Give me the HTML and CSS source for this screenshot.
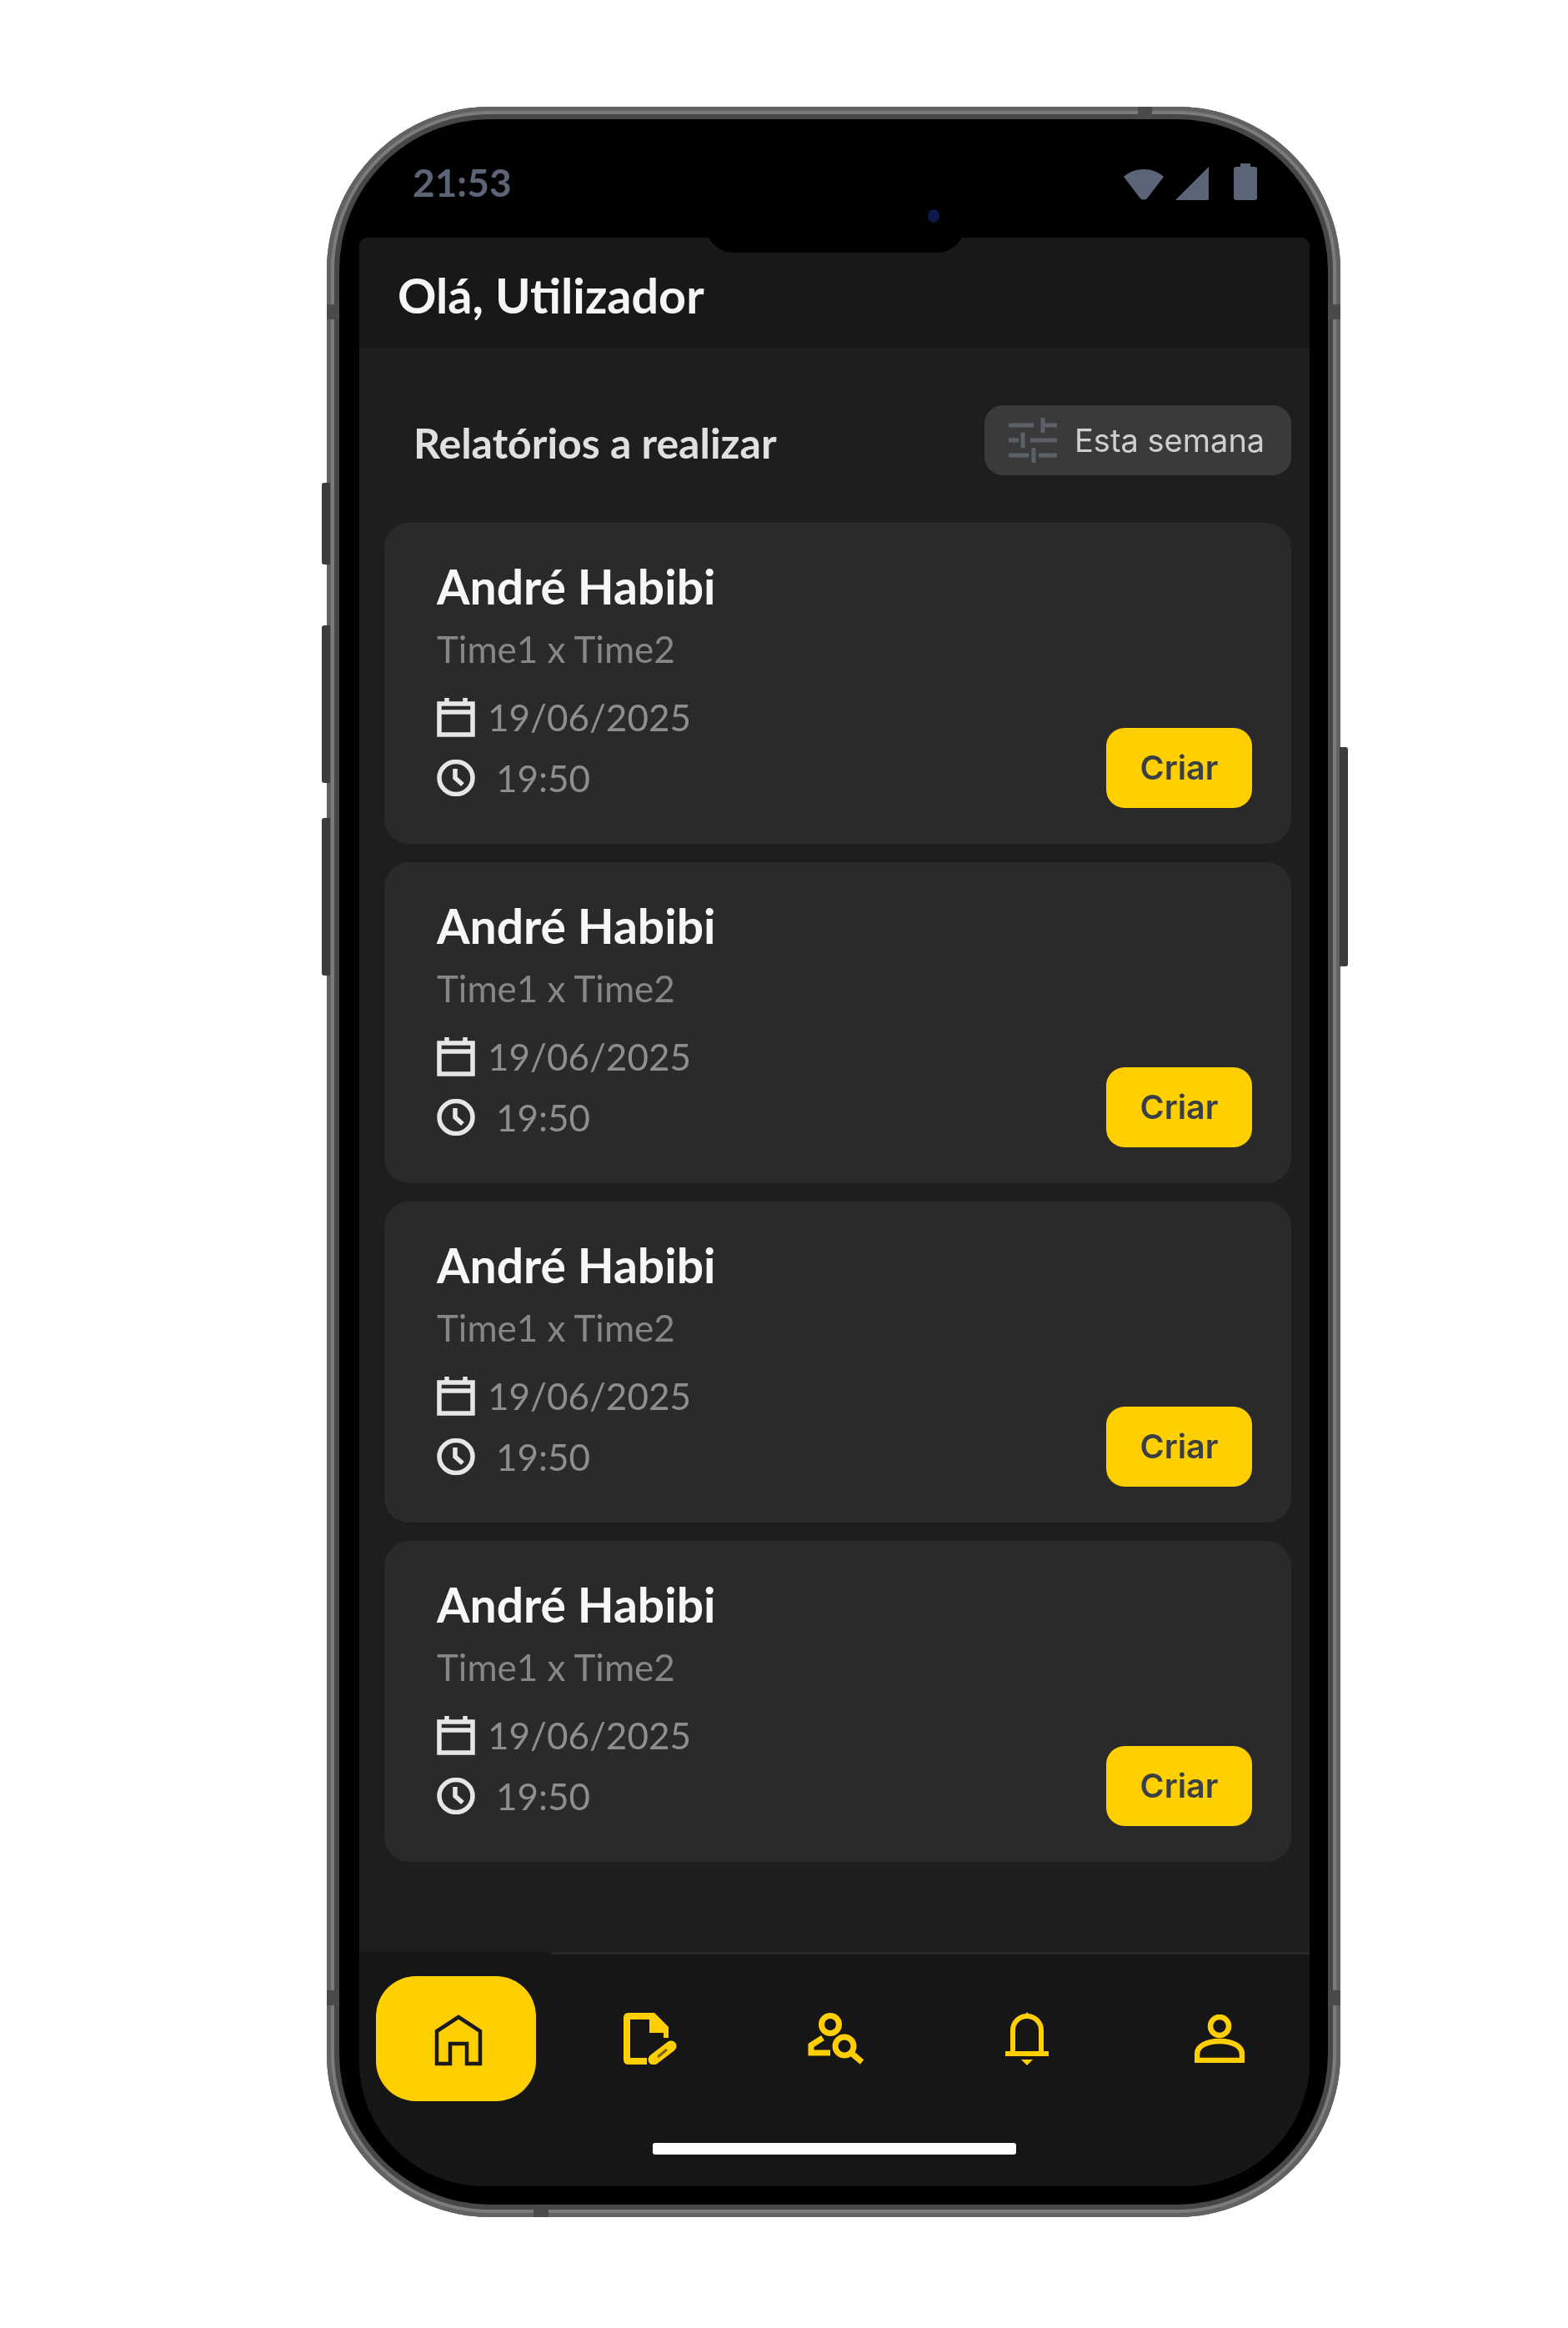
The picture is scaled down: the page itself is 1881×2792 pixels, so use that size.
FILE: index.html
```html
<!DOCTYPE html>
<html lang="pt">
<head>
    <meta charset="UTF-8">
    <meta name="viewport" content="width=device-width, initial-scale=1.0">
    <title>Relatórios</title>
    <link rel="stylesheet" href="styles.css">
</head>
<body>
    <div class="phone">
        <span class="side-btn side-mute"></span>
        <span class="side-btn side-up"></span>
        <span class="side-btn side-down"></span>
        <span class="side-btn side-power"></span>
        <span class="seam seam-top"></span>
        <span class="seam seam-left"></span>
        <span class="seam seam-right"></span>
        <span class="seam seam-left-low"></span>
        <span class="seam seam-right-low"></span>
        <span class="seam seam-bottom"></span>

        <div class="bezel">
            <div class="notch"><span class="camera"></span></div>

            <div class="status-bar">
                <span class="clock-time">21:53</span>
                <div class="status-icons">
                    <svg width="50" height="38" viewBox="0 0 50 38"><path d="M1 10 C14 -2 36 -2 49 10 L29 36 Q25 39 21 36 Z" fill="#5b6577"/></svg>
                    <svg width="42" height="40" viewBox="0 0 42 40"><path d="M41 0 V38 Q41 40 39 40 H1 Z" fill="#5b6577"/></svg>
                    <svg width="28" height="44" viewBox="0 0 28 44"><path d="M8 4 V1 Q8 0 9 0 H19 Q20 0 20 1 V4 H25 Q28 4 28 7 V41 Q28 44 25 44 H3 Q0 44 0 41 V7 Q0 4 3 4 Z" fill="#5b6577"/></svg>
                </div>
            </div>

            <div class="screen">
                <header class="top-bar">
                    <h1>Olá, Utilizador</h1>
                </header>

                <main class="content">
                    <div class="section-head">
                        <h2>Relatórios a realizar</h2>
                        <div class="filter">
                            <svg width="58" height="54" viewBox="0 0 58 54" fill="none" stroke="#5c6068" stroke-width="5"><path d="M0 9H30M42 9H58M41 0V18M0 27H12M26 27H58M17 18V36M0 45H24M36 45H58M30 36V54"/></svg>
                            <span>Esta semana</span>
                        </div>
                    </div>

                    <div class="card-list">
                        <article class="card">
                            <div class="card-info">
                                <h3>André Habibi</h3>
                                <p class="teams">Time1 x Time2</p>
                                <p class="meta meta-date">
                                    <svg width="46" height="48" viewBox="0 0 46 48" fill="none" stroke="#e6e6e6" stroke-width="5.5"><path d="M3 8H43V45H3ZM3 18H43M12 1V8M34 1V8"/></svg>
                                    19/06/2025
                                </p>
                                <p class="meta meta-time">
                                    <svg width="46" height="44" viewBox="0 0 46 44" fill="none" stroke="#e6e6e6" stroke-width="5.5"><ellipse cx="23" cy="22" rx="20" ry="19.5"/><path d="M22 11V22L31 30"/></svg>
                                    19:50
                                </p>
                            </div>
                            <button class="create-btn">Criar</button>
                        </article>

                        <article class="card">
                            <div class="card-info">
                                <h3>André Habibi</h3>
                                <p class="teams">Time1 x Time2</p>
                                <p class="meta meta-date">
                                    <svg width="46" height="48" viewBox="0 0 46 48" fill="none" stroke="#e6e6e6" stroke-width="5.5"><path d="M3 8H43V45H3ZM3 18H43M12 1V8M34 1V8"/></svg>
                                    19/06/2025
                                </p>
                                <p class="meta meta-time">
                                    <svg width="46" height="44" viewBox="0 0 46 44" fill="none" stroke="#e6e6e6" stroke-width="5.5"><ellipse cx="23" cy="22" rx="20" ry="19.5"/><path d="M22 11V22L31 30"/></svg>
                                    19:50
                                </p>
                            </div>
                            <button class="create-btn">Criar</button>
                        </article>

                        <article class="card">
                            <div class="card-info">
                                <h3>André Habibi</h3>
                                <p class="teams">Time1 x Time2</p>
                                <p class="meta meta-date">
                                    <svg width="46" height="48" viewBox="0 0 46 48" fill="none" stroke="#e6e6e6" stroke-width="5.5"><path d="M3 8H43V45H3ZM3 18H43M12 1V8M34 1V8"/></svg>
                                    19/06/2025
                                </p>
                                <p class="meta meta-time">
                                    <svg width="46" height="44" viewBox="0 0 46 44" fill="none" stroke="#e6e6e6" stroke-width="5.5"><ellipse cx="23" cy="22" rx="20" ry="19.5"/><path d="M22 11V22L31 30"/></svg>
                                    19:50
                                </p>
                            </div>
                            <button class="create-btn">Criar</button>
                        </article>

                        <article class="card">
                            <div class="card-info">
                                <h3>André Habibi</h3>
                                <p class="teams">Time1 x Time2</p>
                                <p class="meta meta-date">
                                    <svg width="46" height="48" viewBox="0 0 46 48" fill="none" stroke="#e6e6e6" stroke-width="5.5"><path d="M3 8H43V45H3ZM3 18H43M12 1V8M34 1V8"/></svg>
                                    19/06/2025
                                </p>
                                <p class="meta meta-time">
                                    <svg width="46" height="44" viewBox="0 0 46 44" fill="none" stroke="#e6e6e6" stroke-width="5.5"><ellipse cx="23" cy="22" rx="20" ry="19.5"/><path d="M22 11V22L31 30"/></svg>
                                    19:50
                                </p>
                            </div>
                            <button class="create-btn">Criar</button>
                        </article>
                    </div>
                </main>

                <footer class="bottom">
                    <div class="nav-line"></div>
                    <nav class="nav">
                        <div class="nav-home">
                            <svg width="58" height="62" viewBox="0 0 58 62" fill="none" stroke="#1a1a1a" stroke-width="4.5"><path d="M3 59V20L29 3L55 20V59H39V35H19V59Z"/></svg>
                        </div>
                        <div class="nav-item">
                            <svg width="64" height="62" viewBox="0 0 64 62" fill="none" stroke="#ffcf00" stroke-width="8"><path d="M28 58H6Q4 58 4 56V6Q4 4 6 4H33"/><path d="M31 0H37L54 17V30H48V24H31Z" fill="#ffcf00" stroke="none"/><path d="M36 56L57 40" stroke-width="13" stroke-linecap="round"/><path d="M41 53L52 44" stroke="#7a6510" stroke-width="3"/></svg>
                        </div>
                        <div class="nav-item">
                            <svg width="68" height="62" viewBox="0 0 68 62" fill="none" stroke="#ffcf00" stroke-width="7"><circle cx="27" cy="14" r="10.5"/><path d="M18 30L4 39V48H27"/><circle cx="44" cy="40" r="11"/><path d="M52 48L65 59"/></svg>
                        </div>
                        <div class="nav-item">
                            <svg width="54" height="64" viewBox="0 0 54 64" fill="none" stroke="#ffcf00" stroke-width="6"><path d="M10 50V22A17 17 0 0 1 44 22V50M1 50H53"/><path d="M27 0L32 7H22ZM20 57H34L27 64Z" fill="#ffcf00" stroke="none"/></svg>
                        </div>
                        <div class="nav-item">
                            <svg width="60" height="58" viewBox="0 0 60 58" fill="none" stroke="#ffcf00" stroke-width="6.5"><circle cx="30" cy="14" r="11"/><path d="M3 55V48C3 38 14 32 30 32S57 38 57 48V55Z"/></svg>
                        </div>
                    </nav>
                    <div class="home-bar"></div>
                </footer>
            </div>
        </div>
    </div>
</body>
</html>
```

FILE: styles.css
```css
body {
    margin: 0;
    background: #fff;
    font-family: 'Lato', sans-serif;
}

h1, h2, h3, p {
    margin: 0;
}

/* aparelho */
.phone {
    position: relative;
    box-sizing: border-box;
    width: 1216px;
    height: 2531px;
    margin: 128px 0 0 392px;
    padding: 15px;
    border-radius: 196px;
    background: #474747;
    box-shadow: inset 0 0 0 5px #626262, inset 0 0 0 9px #7c7c7c;
    filter: blur(0.7px);
}

.bezel {
    position: relative;
    display: flex;
    flex-direction: column;
    height: 100%;
    padding: 0 22px 22px 24px;
    box-sizing: border-box;
    border-radius: 181px;
    background: #000;
}

.side-btn {
    position: absolute;
    width: 10px;
    border-radius: 3px 0 0 3px;
    background: #3c3c3c;
}

.side-mute { left: -6px; top: 451px; height: 98px; }
.side-up { left: -6px; top: 622px; height: 189px; }
.side-down { left: -6px; top: 853px; height: 189px; }
.side-power { right: -9px; left: auto; top: 768px; height: 263px; border-radius: 0 3px 3px 0; }

.seam {
    position: absolute;
    background: #4a4a4a;
}

.seam-top { left: 973px; top: 0; width: 17px; height: 15px; }
.seam-left { left: 0; top: 237px; width: 15px; height: 18px; }
.seam-right { right: 0; top: 237px; width: 15px; height: 18px; }
.seam-left-low { left: 0; top: 2259px; width: 15px; height: 18px; }
.seam-right-low { right: 0; top: 2259px; width: 15px; height: 18px; }
.seam-bottom { left: 248px; bottom: 0; width: 18px; height: 15px; }

.notch {
    position: absolute;
    top: 100px;
    left: 439px;
    width: 312px;
    height: 60px;
    border-radius: 0 0 34px 34px;
    background: #000;
}

.camera {
    position: absolute;
    top: 8px;
    right: 31px;
    width: 14px;
    height: 16px;
    border-radius: 50%;
    background: #0b1a4a;
}

.status-bar {
    display: flex;
    justify-content: space-between;
    align-items: center;
    height: 142px;
    padding: 8px 63px 0 64px;
    box-sizing: border-box;
}

.clock-time {
    font-size: 46px;
    font-weight: 700;
    color: #5b6577;
}

.status-icons {
    display: flex;
    align-items: flex-end;
    gap: 12px;
}

.status-icons svg:last-child {
    margin-left: 17px;
}

/* tela */
.screen {
    flex: 1;
    display: flex;
    flex-direction: column;
    overflow: hidden;
    border-radius: 10px 10px 150px 150px;
    background: #1e1e1e;
}

.top-bar {
    display: flex;
    align-items: center;
    height: 132px;
    padding: 4px 0 0 46px;
    box-sizing: border-box;
    background: #181818;
}

.top-bar h1 {
    font-size: 57.5px;
    font-weight: 700;
    color: #f5f5f5;
}

.content {
    flex: 1;
    padding: 69px 22px 0 30px;
}

.section-head {
    display: flex;
    justify-content: space-between;
    align-items: center;
    padding-left: 35px;
}

.section-head h2 {
    padding-top: 6px;
    font-size: 50px;
    font-weight: 700;
    color: #e0e0e0;
}

.filter {
    display: flex;
    align-items: center;
    gap: 21px;
    box-sizing: border-box;
    width: 368px;
    height: 84px;
    padding-left: 29px;
    border-radius: 22px;
    background: #3a3a3a;
    font-family: 'Inter', sans-serif;
    font-size: 38px;
    color: #cfcfcf;
}

.card-list {
    display: flex;
    flex-direction: column;
    gap: 22px;
    margin-top: 57px;
}

.card {
    display: flex;
    justify-content: space-between;
    align-items: flex-end;
    box-sizing: border-box;
    height: 385px;
    padding: 46px 47px 43px 63px;
    border-radius: 30px;
    background: #2a2a2a;
}

.card-info {
    align-self: flex-start;
}

.card h3 {
    font-size: 57px;
    line-height: 60px;
    font-weight: 700;
    color: #f7f7f7;
}

.teams {
    margin-top: 20px;
    font-size: 44px;
    line-height: 50px;
    color: #868686;
}

.meta {
    display: flex;
    align-items: center;
    font-size: 44px;
    color: #8e8e8e;
}

.meta-date {
    gap: 15px;
    height: 50px;
    margin-top: 32px;
}

.meta-time {
    gap: 25px;
    height: 44px;
    margin-top: 26px;
}

.create-btn {
    width: 175px;
    height: 96px;
    border: 0;
    border-radius: 22px;
    background: #ffcf00;
    font-family: 'Inter', sans-serif;
    font-size: 39.5px;
    font-weight: 600;
    color: #3a3f44;
}

/* navegação */
.bottom {
    background: #161616;
}

.nav-line {
    height: 3px;
    margin-left: 230px;
    background: #2a2a2c;
}

.nav {
    display: grid;
    grid-template-columns: 214px 230px 216px 242px 220px;
    align-items: center;
    height: 150px;
    margin-top: 26px;
    padding-left: 20px;
}

.nav-home {
    display: flex;
    justify-content: center;
    align-items: center;
    width: 192px;
    height: 150px;
    border-radius: 48px;
    background: #ffcf00;
}

.nav-home svg {
    margin: 4px 0 0 6px;
}

.nav-item {
    display: flex;
    justify-content: center;
}

.home-bar {
    width: 436px;
    height: 14px;
    margin: 50px auto 38px;
    border-radius: 3px;
    background: #fff;
}
```
